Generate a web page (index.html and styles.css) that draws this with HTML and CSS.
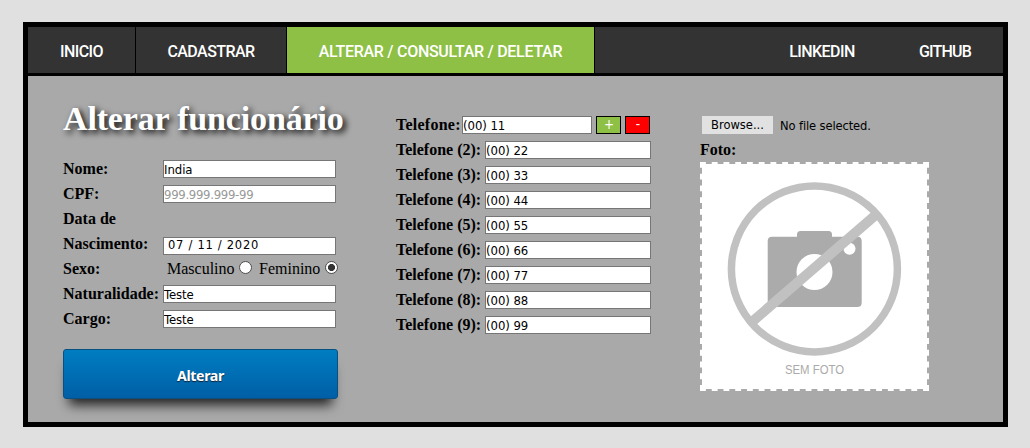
FILE: index.html
```html
<!DOCTYPE html>
<html lang="pt-BR">
<head>
<meta charset="utf-8">
<title>Alterar funcionário</title>
<link rel="stylesheet" href="styles.css">
</head>
<body>
<div class="frame">
  <nav class="nav">
    <a class="nav-item inicio">INICIO</a>
    <a class="nav-item cadastrar">CADASTRAR</a>
    <a class="nav-item active">ALTERAR / CONSULTAR / DELETAR</a>
    <a class="nav-item link linkedin">LINKEDIN</a>
    <a class="nav-item link github">GITHUB</a>
  </nav>
  <main class="content">
    <form class="employee">
      <h1 class="title">Alterar funcionário</h1>
      <div class="row"><label class="label">Nome:</label><input class="field" value="India"></div>
      <div class="row"><label class="label">CPF:</label><input class="field cpf" placeholder="999.999.999-99"></div>
      <div class="row tall"><label class="label">Data de Nascimento:</label><input class="field date" value="07 / 11 / 2020"></div>
      <div class="row"><span class="label">Sexo:</span>
        <div class="options"><label class="masc">Masculino</label><span class="radio"></span><label class="fem">Feminino</label><span class="radio checked"></span></div>
      </div>
      <div class="row"><label class="label">Naturalidade:</label><input class="field" value="Teste"></div>
      <div class="row"><label class="label">Cargo:</label><input class="field" value="Teste"></div>
      <button class="submit" type="button">Alterar</button>
    </form>
    <section class="phones">
      <div class="row"><label class="phone-label first">Telefone:</label><input class="field" value="(00) 11"><button class="mini add" type="button">+</button><button class="mini remove" type="button">-</button></div>
      <div class="row"><label class="phone-label">Telefone (2):</label><input class="field" value="(00) 22"></div>
      <div class="row"><label class="phone-label">Telefone (3):</label><input class="field" value="(00) 33"></div>
      <div class="row"><label class="phone-label">Telefone (4):</label><input class="field" value="(00) 44"></div>
      <div class="row"><label class="phone-label">Telefone (5):</label><input class="field" value="(00) 55"></div>
      <div class="row"><label class="phone-label">Telefone (6):</label><input class="field" value="(00) 66"></div>
      <div class="row"><label class="phone-label">Telefone (7):</label><input class="field" value="(00) 77"></div>
      <div class="row"><label class="phone-label">Telefone (8):</label><input class="field" value="(00) 88"></div>
      <div class="row"><label class="phone-label">Telefone (9):</label><input class="field" value="(00) 99"></div>
    </section>
    <section class="photo">
      <div class="row"><button class="browse" type="button">Browse...</button><span class="file-name">No file selected.</span></div>
      <div class="row photo-label">Foto:</div>
      <svg class="picture" width="229" height="229" viewBox="0 0 229 229">
        <rect x="2" y="2" width="225" height="225" fill="#fff"/>
        <path d="M0 1H229M0 228H229M1 0V229M228 0V229" stroke="#fff" stroke-width="2" stroke-dasharray="5.87" fill="none"/>
        <path d="M72 74.7H97V72.500Q97 69 100.500 69H128.500Q132 69 132 72.500V74.700H157.500Q161.700 74.700 161.700 79V140.500Q161.700 145 157.200 145H72.200Q67.700 145 67.700 140.500V79Q67.700 74.700 72 74.700Z" fill="#ababab"/>
        <circle cx="114.500" cy="110" r="18" fill="#fff"/>
        <circle cx="149.500" cy="86.700" r="6" fill="#fff"/>
        <circle cx="114.400" cy="106.900" r="83" fill="none" stroke="#c1c1c1" stroke-width="7.500"/>
        <path d="M53 159L174.500 54" stroke="#c1c1c1" stroke-width="10"/>
        <text class="picture-text" x="85" y="212" textLength="59" lengthAdjust="spacingAndGlyphs">SEM FOTO</text>
      </svg>
    </section>
  </main>
</div>
</body>
</html>
```

FILE: styles.css
```css
* { box-sizing: border-box; }
body {
  margin: 0;
  padding: 22px 22px 21px 23px;
  height: 448px;
  background: #e0e0e0;
  color: #000;
  font: 16px "Liberation Serif", serif;
  overflow: hidden;
}
.frame {
  height: 405px;
  border: 5px solid #000;
  background: #a9a9a9;
}
.nav {
  display: flex;
  height: 49px;
  background: #333;
  border-bottom: 3px solid #000;
}
.nav-item {
  display: flex;
  align-items: center;
  justify-content: center;
  border-right: 1px solid #000;
  color: #fff;
  font: 500 16px Roboto, sans-serif;
  letter-spacing: -.55px;
  white-space: nowrap;
  padding-top: 2px;
}
.inicio { width: 108px; }
.cadastrar { width: 151px; }
.active { width: 308px; background: #8dc044; letter-spacing: -.28px; }
.link { border-right: 0; }
.linkedin { width: 130px; margin-left: auto; }
.github { width: 116px; letter-spacing: -.8px; }
.content {
  display: flex;
  padding: 23px 35px 0;
}
.employee { width: 333px; }
.title {
  margin: 0 0 18px;
  height: 40px;
  line-height: 40px;
  font-size: 34px;
  letter-spacing: -.16px;
  color: #fff;
  white-space: nowrap;
  text-shadow: 3px 3px 6px #000;
}
.row {
  display: flex;
  height: 25px;
  line-height: 25px;
  align-items: flex-start;
}
.tall { height: 50px; }
.label {
  width: 100px;
  flex: none;
  margin-top: -1px;
  font-weight: bold;
}
.field {
  width: 173px;
  height: 18px;
  min-width: 0;
  margin: 3px 0 0;
  padding: 0;
  border: 1px solid #767676;
  border-radius: 0;
  background: #fff;
  color: #000;
  font: 13px "DejaVu Sans Condensed", "DejaVu Sans", sans-serif;
  letter-spacing: -.05px;
}
.field.cpf { letter-spacing: -.3px; }
.field::placeholder { color: #999; opacity: 1; }
.field.date {
  margin-top: 30px;
  padding: 0 0 2px 4px;
  font: 11.500px "DejaVu Sans", sans-serif;
  letter-spacing: .72px;
}
.options { display: flex; padding-left: 4px; margin-top: -1px; }
.masc { width: 72px; }
.fem { width: 66px; margin-left: 7px; }
.radio {
  width: 13px;
  height: 13px;
  flex: none;
  margin-top: 5px;
  border: 1px solid #4d4d4d;
  border-radius: 50%;
  background: #fff;
}
.radio.checked { background: radial-gradient(circle, #333 3.300px, #fff 3.800px); }
.submit {
  display: block;
  width: 275px;
  height: 50px;
  margin-top: 17px;
  padding: 3px 0 0;
  border: 1px solid #0b4f80;
  border-radius: 3px;
  background: linear-gradient(#007dc1, #005fa6);
  box-shadow: 0 12px 12px -6px rgba(0, 0, 0, .8);
  color: #fff;
  font: bold 14.200px "Noto Sans", sans-serif;
  letter-spacing: -.4px;
  text-shadow: 0 1px 1px #123;
}
.phones { width: 304px; padding-top: 14px; }
.phone-label { width: 89px; flex: none; margin-top: -1px; font-weight: bold; }
.phone-label.first { width: 66px; letter-spacing: .25px; }
.phones .field { width: 166px; }
.phones .first + .field { width: 130px; }
.mini {
  width: 25px;
  height: 18px;
  margin: 3px 0 0 4px;
  padding: 0 0 0 1px;
  border: 1px solid #000;
  color: #fff;
  font: 13.300px/16px "DejaVu Sans Condensed", sans-serif;
}
.add { background: #8dc044; }
.remove { background: #f00; }
.photo { padding-top: 14px; }
.browse {
  width: 71px;
  height: 18px;
  margin: 3px 0 0 2px;
  padding: 0;
  border: 0;
  background: #e1e1e1;
  color: #000;
  font: 12.800px/18px "DejaVu Sans Condensed", sans-serif;
}
.file-name {
  margin-left: 7px;
  letter-spacing: -.12px;
  font: 12.800px/25px "DejaVu Sans Condensed", sans-serif;
}
.photo-label { font-weight: bold; line-height: 23px; }
.picture { display: block; margin-top: -1px; }
.picture-text { font: 12.500px "Liberation Sans", sans-serif; fill: #aaa; }
```
